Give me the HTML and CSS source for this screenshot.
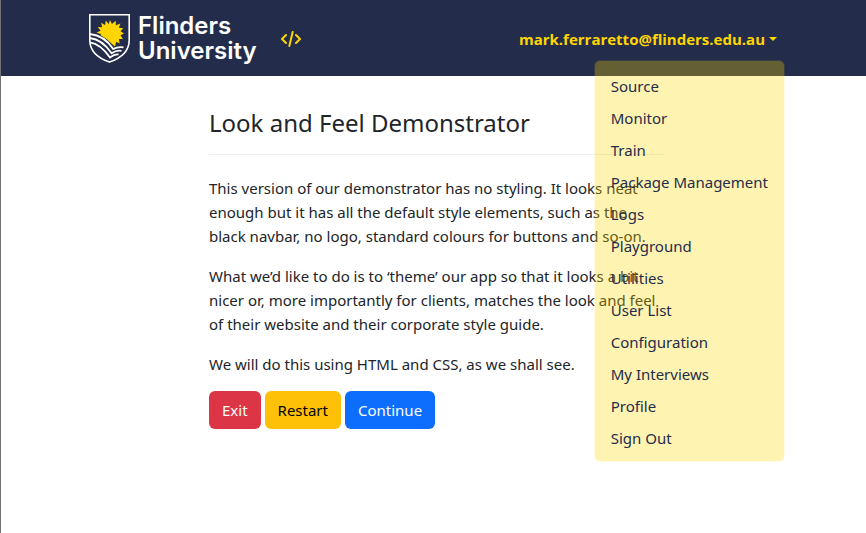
FILE: index.html
```html
<!DOCTYPE html>
<html lang="en">
<head>
<meta charset="utf-8">
<meta name="viewport" content="width=device-width, initial-scale=1">
<title>Look and Feel Demonstrator</title>
<link rel="stylesheet" href="styles.css">
</head>
<body>
<header class="navbar">
  <div class="container navbar-row">
    <a class="brand" href="#">
      <svg class="shield" viewBox="0 0 41 49" aria-hidden="true">
        <path fill="#ffd600" d="M21 6 L22.900 10 L26.700 6.800 L26.900 11.200 L31.400 9.500 L29.900 13.700 L34.200 14.200 L31.500 17.300 L35 19.600 L31.500 21.300 L33.900 25 L30 25 L30.500 29.500 L27.200 27.700 L26 32.500 L23.600 30.600 Q18.500 24.500 11.600 21.200 L12 20.300 L7.500 18.600 L11.600 16.700 L8.800 13 L13.200 13.200 L12.100 8.800 L16 10.900 L16.800 6.600 L19.600 10 Z"/>
        <path fill="none" stroke="#fff" stroke-width="1.600" d="M.8 .8 H40.200 V26 C40.200 38 31 44.500 20.500 48.100 C10 44.500 .8 38 .8 26 Z"/>
        <g fill="none" stroke="#fff" stroke-width="1.800">
          <path d="M.8 20 C11 21 19 27 24.200 35 Q28.500 32.500 34.500 33.300"/>
          <path d="M.8 24 C10 25 17 31 22.600 39.300 Q27.500 36 32.500 36.900"/>
          <path d="M.8 28.300 C9 29.500 15.500 35.500 21 43.500 Q25.500 40 29.500 40.500"/>
        </g>
      </svg>
      <span class="brand-name">Flinders<br>University</span>
    </a>
    <a class="code-link" href="#" aria-label="Source code">
      <svg viewBox="0 0 20 16" aria-hidden="true">
        <path fill="none" stroke="#ffd600" stroke-width="2" stroke-linecap="round" stroke-linejoin="round" d="M5 4 L1 8 L5 12 M15 4 L19 8 L15 12 M11.700 1 L8.300 15"/>
      </svg>
    </a>
    <div class="account">
      <button class="account-toggle" type="button" aria-expanded="true" aria-controls="account-menu">mark.ferraretto@flinders.edu.au<span class="caret"></span></button>
      <nav class="menu" id="account-menu" aria-label="Account">
        <a href="#">Source</a>
        <a href="#">Monitor</a>
        <a href="#">Train</a>
        <a href="#">Package Management</a>
        <a href="#">Logs</a>
        <a href="#">Playground</a>
        <a href="#">Utilities</a>
        <a href="#">User List</a>
        <a href="#">Configuration</a>
        <a href="#">My Interviews</a>
        <a href="#">Profile</a>
        <a href="#">Sign Out</a>
      </nav>
    </div>
  </div>
</header>
<div class="page">
  <main class="container">
    <div class="content">
      <h1>Look and Feel Demonstrator</h1>
      <p>This version of our demonstrator has no styling. It looks neat enough but it has all the default style elements, such as the black navbar, no logo, standard colours for buttons and so-on.</p>
      <p>What we’d like to do is to ‘theme’ our app so that it looks a bit nicer or, more importantly for clients, matches the look and feel of their website and their corporate style guide.</p>
      <p>We will do this using HTML and CSS, as we shall see.</p>
      <div class="actions">
        <button class="btn btn-danger" type="button">Exit</button>
        <button class="btn btn-warning" type="button">Restart</button>
        <button class="btn btn-primary" type="button">Continue</button>
      </div>
    </div>
  </main>
</div>
</body>
</html>
```
FILE: styles.css
```css
* {
  box-sizing: border-box;
}

body {
  margin: 0;
  min-height: 100vh;
  border-left: 1px solid #737373;
  background: #fff;
  color: #212529;
  font-family: "Noto Sans", "Open Sans", sans-serif;
  font-size: 15px;
  line-height: 24px;
}

.navbar,
.page {
  padding-left: 7px;
}

.navbar {
  background: #232d4b;
  padding-top: 8px;
  padding-bottom: 8px;
}

.container {
  max-width: 720px;
  margin: 0 auto;
  padding: 0 12px;
}

.navbar-row {
  display: flex;
  align-items: center;
  min-height: 60px;
}

.brand {
  display: flex;
  align-items: center;
  gap: 8px;
  color: #fff;
  text-decoration: none;
}

.shield {
  width: 41px;
  height: 49px;
}

.brand-name {
  font-family: Inter, sans-serif;
  font-size: 24px;
  font-weight: 600;
  line-height: 25px;
}

.code-link {
  display: flex;
  margin-left: 24px;
  padding-top: 2px;
}

.code-link svg {
  width: 20px;
  height: 16px;
}

.account {
  position: relative;
  margin-left: auto;
}

.account-toggle {
  display: flex;
  align-items: center;
  gap: 4px;
  padding: 9px 8px 7px;
  border: 0;
  background: none;
  color: #ffd600;
  font: 700 15px/24px "Open Sans", "Noto Sans", sans-serif;
}

.caret {
  border-top: 4px solid;
  border-left: 4px solid transparent;
  border-right: 4px solid transparent;
}

.menu {
  position: absolute;
  z-index: 1;
  top: 100%;
  right: 0;
  margin-top: 2px;
  padding: 9px 0 7px;
  border: 1px solid rgba(255, 214, 0, 0.1);
  border-radius: 6px;
  background: rgba(255, 214, 0, 0.3);
  background-clip: padding-box;
}

.menu a {
  display: block;
  padding: 4px 16px;
  color: #232d4b;
  text-decoration: none;
  white-space: nowrap;
}

.content {
  max-width: 456px;
  margin: 0 auto;
  padding: 32px 0;
}

h1 {
  margin: 0 0 21px;
  padding-bottom: 16px;
  border-bottom: 1px solid #eee;
  font-size: 24px;
  font-weight: 400;
  line-height: 30px;
}

p {
  margin: 0 0 16px;
}

.actions {
  display: flex;
  gap: 4px;
  margin-top: -1px;
}

.btn {
  padding: 6px 12px;
  border: 1px solid transparent;
  border-radius: 6px;
  font: inherit;
}

.btn-danger {
  background: #dc3545;
  color: #fff;
}

.btn-warning {
  background: #ffc107;
  color: #000;
}

.btn-primary {
  background: #0d6efd;
  color: #fff;
}
```
